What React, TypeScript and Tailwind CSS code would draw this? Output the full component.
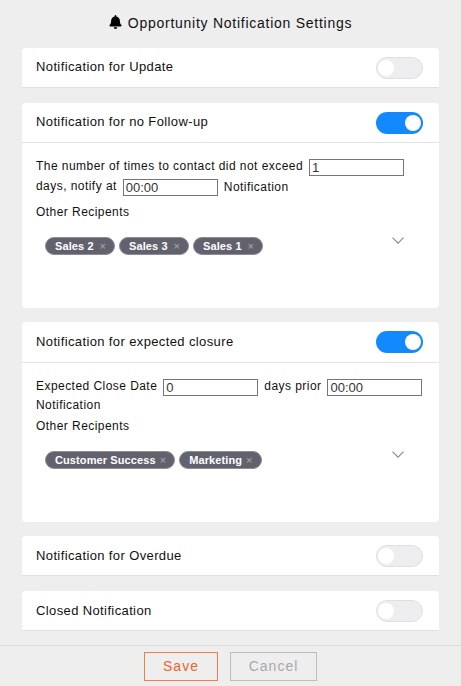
import React from "react";

function Toggle({ on }: { on: boolean }) {
  return on ? (
    <div className="flex h-[22px] w-[47px] shrink-0 items-center justify-end rounded-full bg-[#1289fe] pr-[2px]">
      <div className="h-[16px] w-[16px] rounded-full bg-white" />
    </div>
  ) : (
    <div className="flex h-[22px] w-[47px] shrink-0 items-center rounded-full border border-[#dfe0e3] bg-[#eeeef0] pl-[1px]">
      <div className="h-[16px] w-[16px] rounded-full bg-white" />
    </div>
  );
}

function Header({ title, on, divider, h, lift }: { title: string; on: boolean; divider?: boolean; h: string; lift: string }) {
  return (
    <div className={`flex items-center justify-between pl-[14px] pr-[16px] ${h} ${divider ? "border-b border-[#e3e3e6]" : ""}`}>
      <span className={`text-[13px] leading-[18px] tracking-[0.38px] text-[#111] ${lift}`}>{title}</span>
      <Toggle on={on} />
    </div>
  );
}

function Tag({ label }: { label: string }) {
  return (
    <span className="flex h-[18px] min-w-[70px] items-center justify-between gap-[4px] whitespace-nowrap rounded-full border border-[#8d8d96] bg-[#62626e] pl-[9px] pr-[8px] text-[11px] font-bold leading-none tracking-[0.1px] text-white">
      {label}
      <span className="text-[11px] font-normal text-[#a9a9b0]">×</span>
    </span>
  );
}

function Field({ value, w }: { value: string; w: string }) {
  return (
    <input
      readOnly
      value={value}
      className={`h-[17px] shrink-0 border border-[#767676] bg-white px-[2px] font-['Liberation_Sans',sans-serif] text-[13px] leading-none tracking-normal text-[#333] ${w}`}
    />
  );
}

function Chevron() {
  return (
    <svg width="12" height="7" viewBox="0 0 12 7" fill="none" stroke="#8a8d94" strokeWidth="1.2" className="shrink-0">
      <path d="M.5.7l5.500 5.500L11.500.7" />
    </svg>
  );
}

function Recipients({ tags }: { tags: string[] }) {
  return (
    <div className="mt-[16px] flex items-start justify-between pl-[9px] pr-[21px]">
      <div className="flex gap-[4px]">
        {tags.map((t) => (
          <Tag key={t} label={t} />
        ))}
      </div>
      <Chevron />
    </div>
  );
}

export default function App() {
  return (
    <div className="flex h-[686px] w-[461px] flex-col overflow-hidden whitespace-nowrap bg-[#eeeeee] font-['Liberation_Sans',sans-serif] text-[12px] tracking-[0.45px] text-[#111]">
      <div className="flex h-[48px] items-start justify-center gap-[6px] pt-[14px]">
        <svg width="13" height="14" viewBox="0 0 448 512" fill="#000" className="mt-[1px]">
          <path d="M224 512c35.300 0 64-28.700 64-64H160c0 35.300 28.700 64 64 64zm215.400-149.700c-19.300-20.800-55.500-52-55.500-154.300 0-77.700-54.500-139.900-127.900-155.200V32c0-17.700-14.300-32-32-32s-32 14.300-32 32v20.800C118.600 68.100 64.100 130.300 64.100 208c0 102.300-36.200 133.500-55.500 154.300-6 6.400-8.700 14.100-8.600 21.700.1 16.400 13 32 32.100 32h383.800c19.100 0 32-15.600 32.100-32 .1-7.600-2.600-15.300-8.600-21.700z" />
        </svg>
        <span className="text-[14px] leading-[18px] tracking-[0.74px]">Opportunity Notification Settings</span>
      </div>

      <div className="flex flex-1 flex-col px-[22px]">
        <div className="mb-[15px] rounded-t-[4px] border-b border-[#e0e0e0] bg-white">
          <Header title="Notification for Update" on={false} h="h-[39px]" lift="-mt-[2px]" />
        </div>

        <div className="mb-[14px] h-[205px] rounded-[4px] bg-white">
          <Header title="Notification for no Follow-up" on divider h="h-[40px]" lift="-mt-[2px]" />
          <div className="px-[14px] pt-[14px]">
            <div className="flex h-[20px] items-center gap-[6px]">
              <span className="-mt-[2px]">The number of times to contact did not exceed</span>
              <Field value="1" w="w-[95px]" />
            </div>
            <div className="flex h-[20px] items-center gap-[6px]">
              <span className="-mt-[3px]">days, notify at</span>
              <Field value="00:00" w="w-[95px]" />
              <span>Notification</span>
            </div>
            <div className="mt-[6px] leading-[18px]">Other Recipents</div>
            <Recipients tags={["Sales 2", "Sales 3", "Sales 1"]} />
          </div>
        </div>

        <div className="mb-[14px] h-[200px] rounded-[4px] bg-white">
          <Header title="Notification for expected closure" on divider h="h-[41px]" lift="" />
          <div className="px-[14px] pt-[14px]">
            <div className="flex h-[20px] items-center gap-[6px]">
              <span className="-mt-[2px]">Expected Close Date</span>
              <Field value="0" w="w-[95px]" />
              <span className="-mt-[2px]">days prior</span>
              <Field value="00:00" w="w-[95px]" />
            </div>
            <div className="-mt-[1px] leading-[18px]">Notification</div>
            <div className="mt-[3px] leading-[18px]">Other Recipents</div>
            <Recipients tags={["Customer Success", "Marketing"]} />
          </div>
        </div>

        <div className="mb-[15px] rounded-t-[4px] border-b border-[#e0e0e0] bg-white">
          <Header title="Notification for Overdue" on={false} h="h-[39px]" lift="" />
        </div>
        <div className="rounded-t-[4px] border-b border-[#e0e0e0] bg-white">
          <Header title="Closed Notification" on={false} h="h-[39px]" lift="" />
        </div>
      </div>

      <div className="flex h-[41px] items-start justify-center gap-[12px] border-t border-[#dcdcdc] pt-[6px]">
        <button className="h-[29px] w-[74px] border border-[#f47b4d] text-[14px] tracking-[1px] text-[#f0622d]">Save</button>
        <button className="h-[29px] w-[87px] border border-[#bdbdbd] text-[14px] tracking-[1px] text-[#a8a8a8]">Cancel</button>
      </div>
    </div>
  );
}
